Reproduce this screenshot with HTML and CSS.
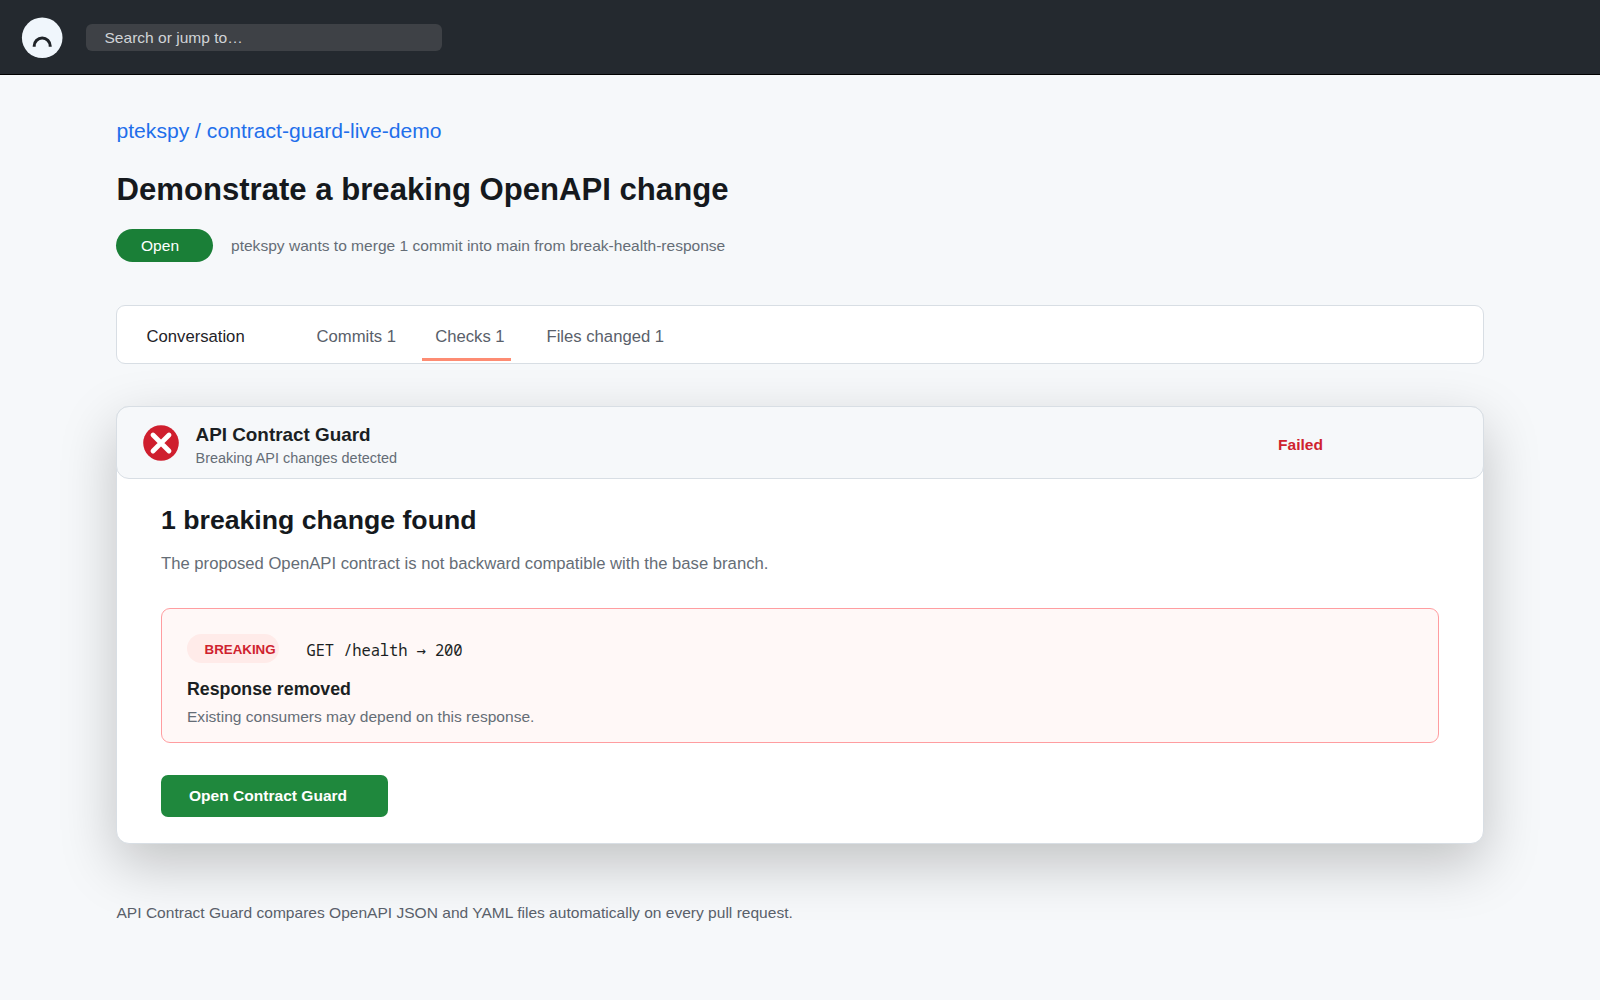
FILE: index.html
```html
<!DOCTYPE html>
<html lang="en">

<head>
    <meta charset="UTF-8">
    <meta name="viewport" content="width=device-width, initial-scale=1.0">
    <title>Demonstrate a breaking OpenAPI change</title>
    <link rel="stylesheet" href="styles.css">
</head>

<body>
    <header class="topbar">
        <svg class="logo" viewBox="0 0 42 42">
            <circle cx="21.2" cy="20.8" r="20.3" fill="#f0f6fc" />
            <path d="M13.2 29.8v-.8a8 8 0 0 1 16 0v.8" fill="none" stroke="#1f2328" stroke-width="3" />
        </svg>
        <div class="search">Search or jump to…</div>
    </header>
    <main class="container">
        <a class="repo">ptekspy / contract-guard-live-demo</a>
        <h1 class="title">Demonstrate a breaking OpenAPI change</h1>
        <div class="meta">
            <span class="state">Open</span>
            <span class="text">ptekspy wants to merge 1 commit into main from break-health-response</span>
        </div>
        <nav class="tabs">
            <div class="tab conversation">Conversation</div>
            <div class="tab commits">Commits 1</div>
            <div class="tab active">Checks 1</div>
            <div class="tab files">Files changed 1</div>
        </nav>
        <section class="card">
            <div class="card-head">
                <svg class="fail-icon" viewBox="0 0 36 36">
                    <circle cx="18" cy="18" r="17.8" fill="#cf1f2e" />
                    <path d="M10 10l16 16M26 10L10 26" stroke="#fff" stroke-width="4.8" stroke-linecap="round" />
                </svg>
                <div class="check">
                    <div class="name">API Contract Guard</div>
                    <div class="desc">Breaking API changes detected</div>
                </div>
                <div class="result">Failed</div>
            </div>
            <div class="card-body">
                <h2>1 breaking change found</h2>
                <p class="summary">The proposed OpenAPI contract is not backward compatible with the base branch.</p>
                <div class="alert">
                    <div class="alert-top">
                        <span class="badge">BREAKING</span>
                        <code>GET /health <span class="arrow">→</span> 200</code>
                    </div>
                    <div class="alert-title">Response removed</div>
                    <div class="alert-text">Existing consumers may depend on this response.</div>
                </div>
                <a class="btn">Open Contract Guard</a>
            </div>
        </section>
        <p class="footnote">API Contract Guard compares OpenAPI JSON and YAML files automatically on every pull request.</p>
    </main>
</body>

</html>
```
FILE: styles.css
```css
* {
    box-sizing: border-box;
}

body {
    margin: 0;
    height: 1000px;
    background: #f6f8fa;
    color: #1b1f23;
    font-family: "Liberation Sans", Arial, sans-serif;
    font-size: 15.56px;
    overflow: hidden;
}

h1,
h2,
p {
    margin: 0;
}

.topbar {
    display: flex;
    align-items: center;
    height: 75px;
    padding-left: 21px;
    background: #24292f;
    border-bottom: 1px solid #000;
}

.logo {
    width: 42px;
    height: 42px;
    margin-top: 1px;
}

.search {
    width: 356px;
    height: 27px;
    margin: 1px 0 0 23px;
    padding-left: 18.5px;
    line-height: 27px;
    border-radius: 6px;
    background: #3e4146;
    color: #d0d3d6;
}

.container {
    width: 1368px;
    margin: 0 auto;
    padding-top: 44px;
}

.repo {
    display: block;
    height: 24px;
    padding-left: 0.5px;
    line-height: 24px;
    font-size: 21.11px;
    color: #1f6feb;
}

.title {
    margin-top: 29px;
    padding-left: 0.5px;
    line-height: 36px;
    font-size: 31.11px;
    color: #15191d;
}

.meta {
    display: flex;
    margin-top: 21px;
    line-height: 33px;
    color: #656d76;
}

.state {
    width: 97px;
    height: 33px;
    margin-right: 18px;
    padding-left: 25px;
    border-radius: 17px;
    background: #1a7f37;
    color: #fff;
}

.tabs {
    display: flex;
    height: 59px;
    margin-top: 43px;
    padding-left: 29.5px;
    border: 1px solid #d8dee4;
    border-radius: 9px;
    background: #fff;
}

.tab {
    height: 55px;
    line-height: 61px;
    font-size: 16.67px;
    color: #59606a;
}

.tab.conversation {
    width: 170px;
    color: #1f2328;
}

.tab.commits {
    width: 105.7px;
}

.tab.active {
    width: 89px;
    padding-left: 13px;
    border-bottom: 3px solid #fd8c73;
}

.tab.files {
    margin-left: 35.3px;
}

.card {
    height: 438px;
    margin-top: 42px;
    border: 1px solid #d8dee4;
    border-radius: 13px;
    background: #fff;
    box-shadow: 0 20px 56px rgba(0, 0, 0, .22);
}

.card-head {
    display: flex;
    height: 73px;
    margin: -1px -1px 0;
    padding-left: 26px;
    border: 1px solid #d8dee4;
    border-radius: 13px;
    background: #f6f8fa;
}

.fail-icon {
    width: 36px;
    height: 36px;
    margin-top: 18px;
}

.check {
    width: 1082.5px;
    margin-left: 16.5px;
    padding-top: 16px;
}

.check .name {
    line-height: 24px;
    font-size: 18.89px;
    font-weight: bold;
}

.check .desc {
    line-height: 23px;
    font-size: 14.44px;
    color: #656d76;
}

.result {
    line-height: 76px;
    font-weight: bold;
    color: #cf222e;
}

.card-body {
    padding: 25px 44px 0;
}

.card-body h2 {
    line-height: 32px;
    font-size: 26.67px;
    color: #15191d;
}

.summary {
    margin-top: 16px;
    line-height: 24px;
    font-size: 16.67px;
    color: #656d76;
}

.alert {
    height: 135px;
    margin-top: 32px;
    padding: 25px 25px 0;
    border: 1px solid #ff9da0;
    border-radius: 9px;
    background: #fff8f7;
}

.alert-top {
    display: flex;
    height: 29px;
}

.badge {
    width: 92px;
    height: 29px;
    padding-left: 17.5px;
    border-radius: 15px;
    background: #ffebe9;
    color: #cf222e;
    font-size: 13.33px;
    font-weight: bold;
    line-height: 31px;
}

.alert code {
    margin-left: 27.5px;
    font-family: "Noto Sans Mono", "DejaVu Sans Mono", monospace;
    font-size: 15.56px;
    letter-spacing: -0.16px;
    line-height: 32px;
}

.alert code .arrow {
    font-family: "DejaVu Sans Mono", monospace;
}

.alert-title {
    margin-top: 14px;
    line-height: 25px;
    font-size: 17.78px;
    font-weight: bold;
}

.alert-text {
    margin-top: 3px;
    line-height: 24px;
    color: #656d76;
}

.btn {
    display: block;
    width: 227px;
    height: 42px;
    margin-top: 32px;
    padding-left: 28px;
    border-radius: 7px;
    background: #1f883d;
    color: #fff;
    font-weight: bold;
    line-height: 42px;
}

.footnote {
    margin-top: 57px;
    padding-left: 0.5px;
    line-height: 24px;
    color: #59606a;
}
```
